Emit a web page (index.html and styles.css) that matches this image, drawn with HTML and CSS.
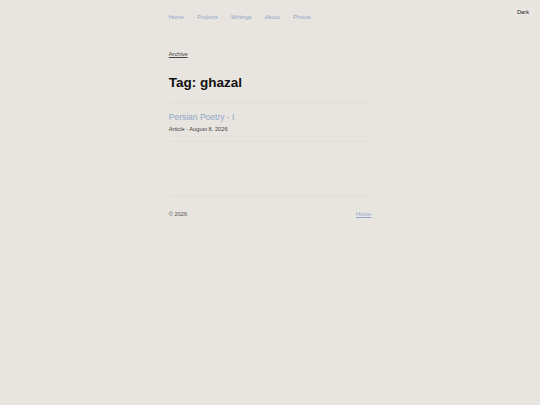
FILE: index.html
```html
<!DOCTYPE html>
<html lang="en">
<head>
<meta charset="utf-8">
<title>Tag: ghazal</title>
<link rel="stylesheet" href="styles.css">
</head>
<body>
<button class="theme-toggle" type="button">Dark</button>
<div class="page">
  <header class="site-header">
    <nav class="nav">
      <a href="#">Home</a>
      <a href="#">Projects</a>
      <a href="#">Writings</a>
      <a href="#">About</a>
      <a href="#">Photos</a>
    </nav>
  </header>
  <main class="main">
    <a class="crumb" href="#">Archive</a>
    <h1 class="title">Tag: ghazal</h1>
    <ul class="posts">
      <li class="post">
        <a class="post-title" href="#">Persian Poetry - I</a>
        <div class="post-meta">Article · August 8, 2026</div>
      </li>
    </ul>
  </main>
  <footer class="site-footer">
    <span class="copy">© 2026</span>
    <a class="footer-link" href="#">Home</a>
  </footer>
</div>
</body>
</html>
```

FILE: styles.css
```css
html, body {
  margin: 0;
  padding: 0;
}
body {
  background: #e8e4df;
  font-family: "Liberation Sans", Arial, sans-serif;
  color: #222;
}
.theme-toggle {
  position: fixed;
  top: 7px;
  right: 7px;
  font-family: "Liberation Sans", Arial, sans-serif;
  font-size: 5.7px;
  line-height: 9px;
  padding: 1px 4px;
  color: #222;
  background: #eae7e3;
  border: none;
  border-radius: 2px;
}
.page {
  width: 202.5px;
  margin: 0 auto;
}
.site-header {
  padding-top: 13px;
}
.nav {
  display: flex;
  gap: 13.3px;
  font-size: 5.7px;
  line-height: 8px;
}
.nav a {
  color: #8ca8c9;
  text-decoration: none;
}
.main {
  display: flex;
  flex-direction: column;
  align-items: flex-start;
}
.crumb {
  margin-top: 29px;
  font-size: 5.7px;
  line-height: 8px;
  color: #444;
  text-decoration: underline;
}
.title {
  margin: 17px 0 0;
  font-size: 13.5px;
  line-height: 16px;
  font-weight: 700;
  color: #111;
}
.posts {
  list-style: none;
  margin: 11px 0 0;
  padding: 0;
  align-self: stretch;
  border-top: 1px solid #e2ded8;
}
.post {
  display: flex;
  flex-direction: column;
  padding: 8.5px 0 8px;
  border-bottom: 1px solid #e2ded8;
}
.post-title {
  font-size: 8.5px;
  line-height: 11px;
  color: #8fa9c9;
  text-decoration: none;
}
.post-meta {
  margin-top: 2.5px;
  font-size: 5.7px;
  line-height: 8px;
  color: #444;
}
.site-footer {
  margin-top: 53px;
  padding-top: 13.5px;
  border-top: 1px solid #e2ded8;
  display: flex;
  justify-content: space-between;
  font-size: 5.7px;
  line-height: 8px;
}
.copy {
  color: #555;
}
.footer-link {
  color: #8fa9c9;
  text-decoration: underline;
}
```
